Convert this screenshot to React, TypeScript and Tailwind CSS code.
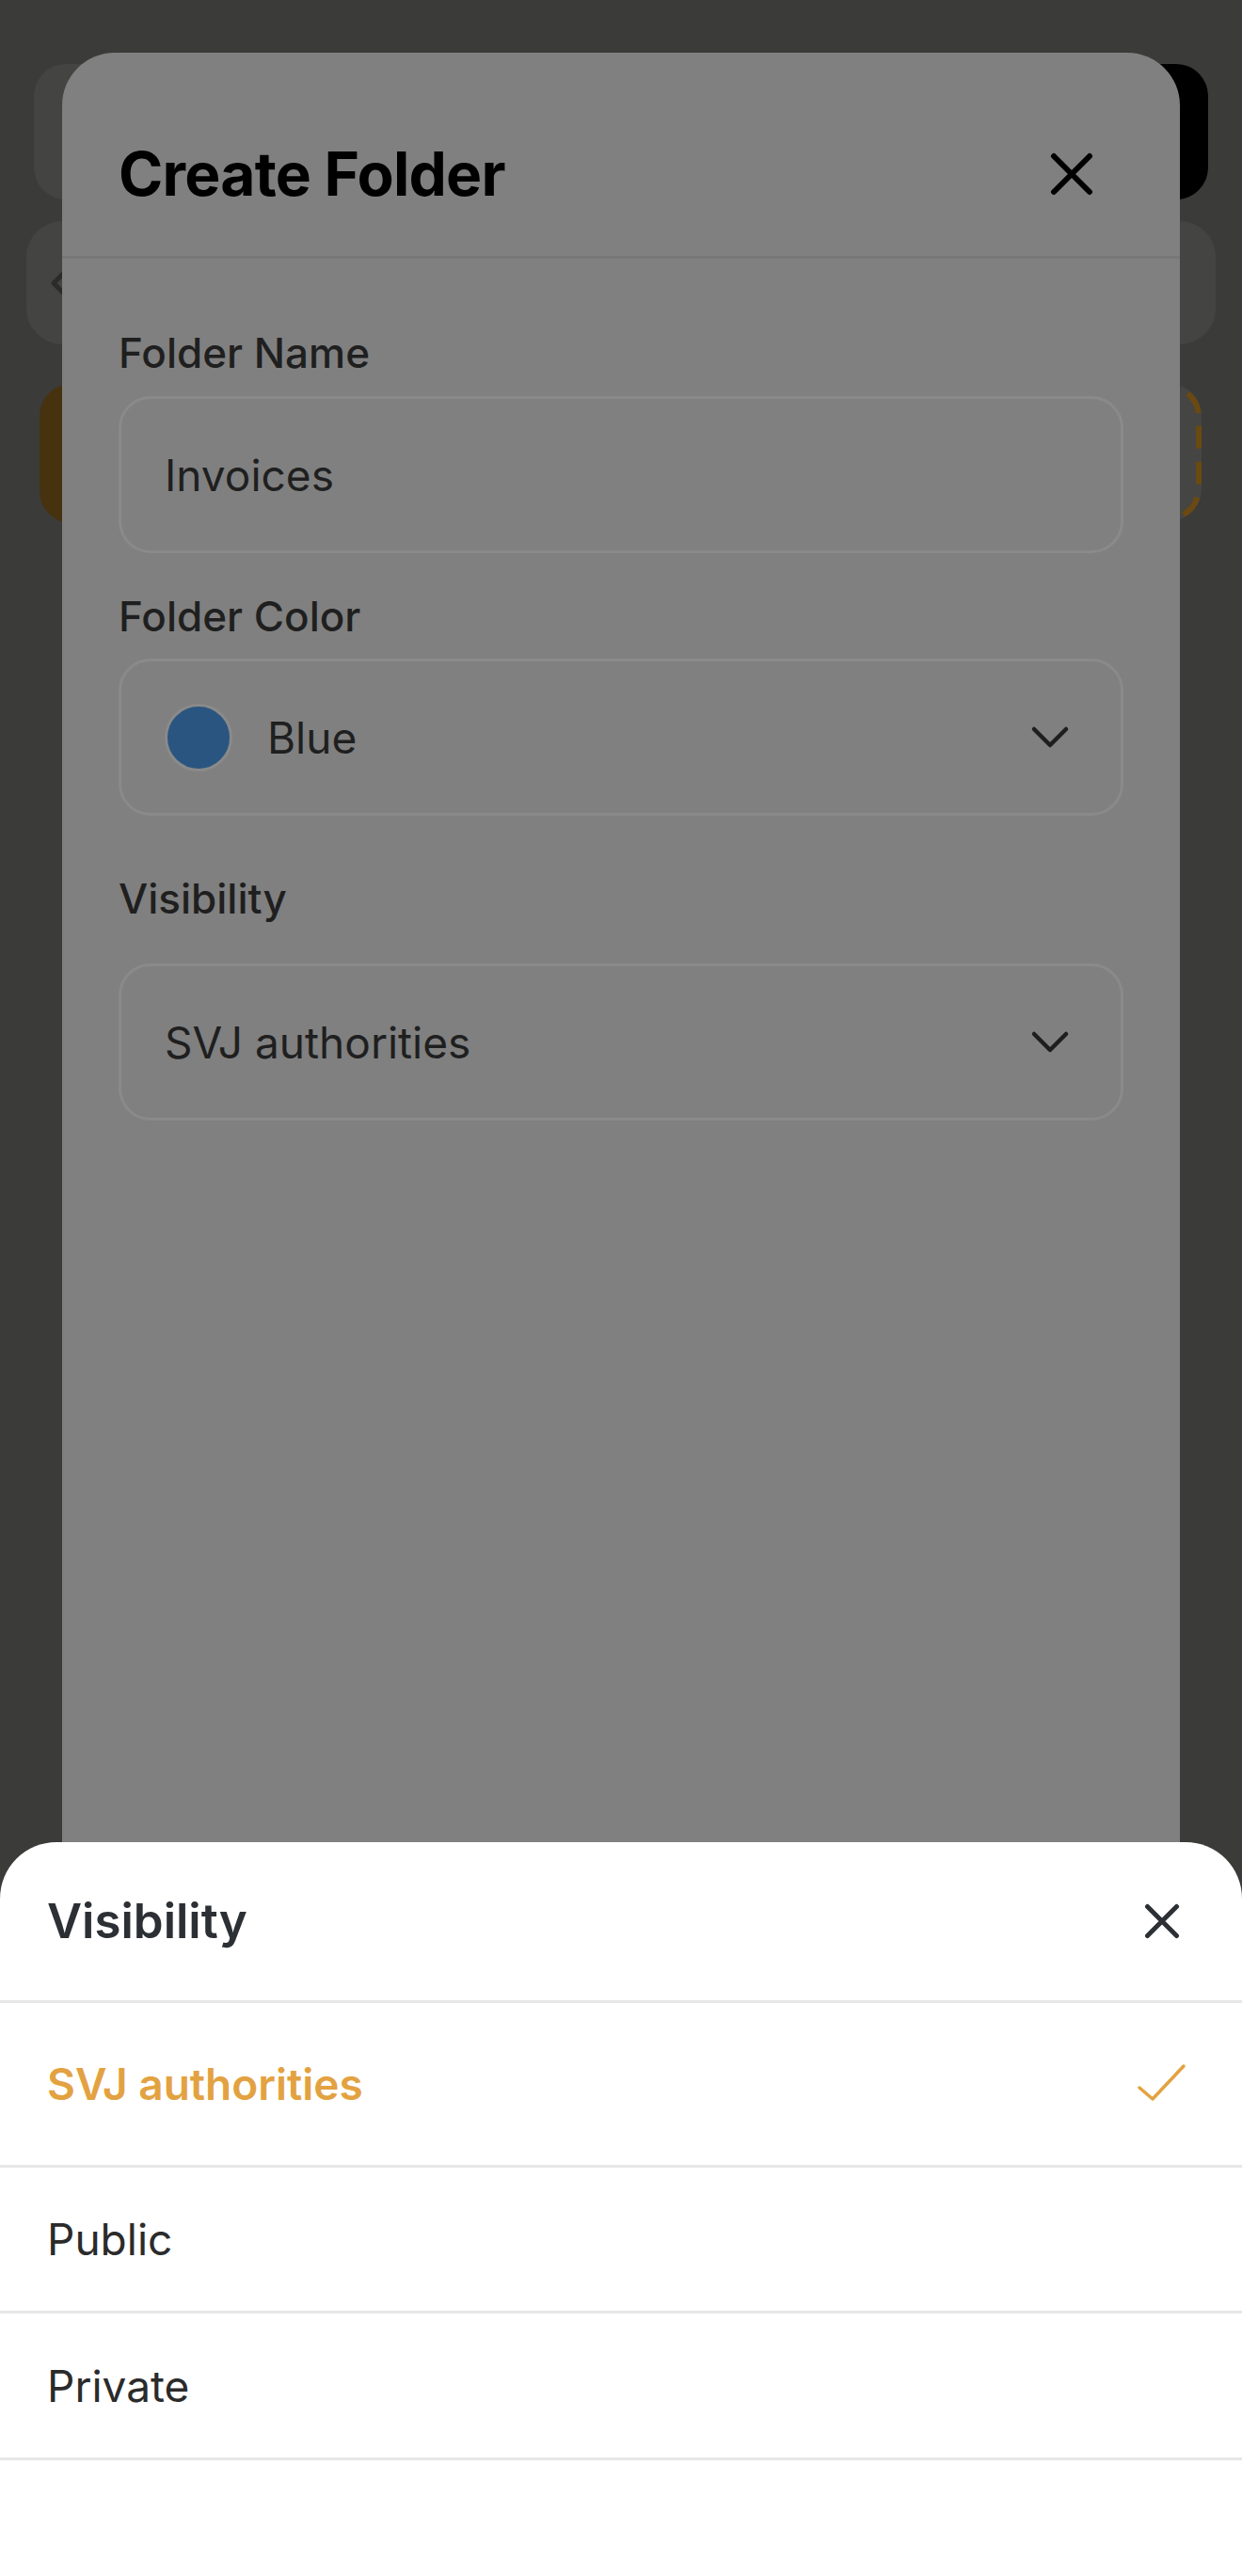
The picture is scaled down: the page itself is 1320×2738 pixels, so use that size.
import React from "react";

function XIcon({ size, stroke, color }: { size: number; stroke: number; color: string }) {
  const p = stroke / 2 + 1;
  return (
    <svg width={size} height={size} viewBox={`0 0 ${size} ${size}`} fill="none">
      <path
        d={`M${p} ${p}L${size - p} ${size - p}M${size - p} ${p}L${p} ${size - p}`}
        stroke={color}
        strokeWidth={stroke}
        strokeLinecap="round"
      />
    </svg>
  );
}

function Chevron() {
  return (
    <svg width="42" height="26" viewBox="0 0 42 26" fill="none">
      <path d="M4 4L21 21L38 4" stroke="#1e1e1e" strokeWidth="4.5" strokeLinecap="round" strokeLinejoin="round" />
    </svg>
  );
}

function Check() {
  return (
    <svg width="54" height="46" viewBox="0 0 54 46" fill="none">
      <path d="M3 27L17 39L50 4" stroke="#e3a241" strokeWidth="3.5" strokeLinecap="round" strokeLinejoin="round" />
    </svg>
  );
}

function Label({ children, className = "" }: { children: React.ReactNode; className?: string }) {
  return <div className={`text-[44px] font-medium leading-[53px] text-[#1f1f1f] ${className}`}>{children}</div>;
}

function Field({ children }: { children: React.ReactNode }) {
  return (
    <div className="flex h-[167px] items-center justify-between rounded-[34px] border-[3px] border-[#8a8a8a] pl-[46px] pr-[54px] text-[46px] leading-[56px] text-[#1f1f1f]">
      {children}
    </div>
  );
}

export default function App() {
  const options = [
    { label: "SVJ authorities", selected: true, h: "h-[175px]" },
    { label: "Public", selected: false, h: "h-[155px]" },
    { label: "Private", selected: false, h: "h-[156px]" },
  ];
  return (
    <div className="relative h-[2738px] w-[1320px] overflow-hidden bg-[#3b3b39] font-['Inter',sans-serif]">
      {/* Background page, dimmed */}
      <div className="flex flex-col pt-[68px]">
        <div className="flex items-stretch gap-[24px] pl-[36px] pr-[36px]">
          <div className="h-[144px] flex-1 rounded-[34px] bg-[#444442]" />
          <div className="h-[144px] w-[146px] rounded-[34px] bg-black" />
        </div>
        <div className="mx-[28px] mt-[23px] flex h-[131px] items-center rounded-[38px] bg-[#444442] pl-[26px]">
          <svg width="16" height="24" viewBox="0 0 16 24" fill="none">
            <path d="M13 2L3 12L13 22" stroke="#2b2b2a" strokeWidth="5" strokeLinecap="round" strokeLinejoin="round" />
          </svg>
        </div>
        <div className="mt-[42px] flex items-stretch justify-between pl-[42px] pr-[43px]">
          <div className="h-[148px] w-[260px] rounded-[34px] bg-[#46320f]" />
          <div className="relative h-[146px] w-[200px] rounded-[34px] bg-[#454543]">
            <svg className="absolute inset-0" width="200" height="146" viewBox="0 0 200 146" fill="none">
              <rect x="3" y="3" width="194" height="140" rx="32" stroke="#6b4912" strokeWidth="6" strokeDasharray="24 14" />
            </svg>
          </div>
        </div>
      </div>

      {/* Create Folder modal (dimmed by the sheet's backdrop) */}
      <div className="absolute bottom-0 left-[66px] top-[56px] flex w-[1188px] flex-col rounded-t-[56px] bg-[#808080]">
        <div className="flex h-[219px] items-start justify-between border-b-[3px] border-[#777777] pl-[60px] pr-[92px] pt-[90px]">
          <h1 className="text-[64px] font-bold leading-[77px] tracking-[-0.012em] text-black">Create Folder</h1>
          <div className="flex h-[77px] items-center">
            <XIcon size={46} stroke={6} color="#000000" />
          </div>
        </div>
        <div className="flex flex-col px-[60px] pt-[74px]">
          <Label className="mb-[19px]">Folder Name</Label>
          <Field>
            <span>Invoices</span>
          </Field>
          <Label className="mb-[18px] mt-[41px]">Folder Color</Label>
          <Field>
            <div className="flex items-center gap-[37px]">
              <span className="h-[72px] w-[72px] rounded-full border-[3px] border-[#8a8a8a] bg-[#2a5580]" />
              <span>Blue</span>
            </div>
            <Chevron />
          </Field>
          <Label className="mb-[42px] mt-[62px]">Visibility</Label>
          <Field>
            <span>SVJ authorities</span>
            <Chevron />
          </Field>
        </div>
      </div>

      {/* Visibility bottom sheet */}
      <div className="absolute bottom-0 left-0 right-0 top-[1958px] flex flex-col rounded-t-[60px] bg-white">
        <div className="flex h-[171px] items-center justify-between border-b-[3px] border-[#e7e7e7] pl-[50px] pr-[66px]">
          <h2 className="text-[51px] font-semibold leading-[62px] text-[#2c3035]">Visibility</h2>
          <XIcon size={38} stroke={5} color="#2c3035" />
        </div>
        {options.map((o) => (
          <div
            key={o.label}
            className={`flex ${o.h} items-center justify-between border-b-[3px] border-[#e7e7e7] pl-[50px] pr-[58px]`}
          >
            <span
              className={
                o.selected
                  ? "text-[46px] font-semibold leading-[56px] text-[#e3a241]"
                  : "text-[46px] font-normal leading-[56px] text-[#2b2b2b]"
              }
            >
              {o.label}
            </span>
            {o.selected && <Check />}
          </div>
        ))}
      </div>
    </div>
  );
}
